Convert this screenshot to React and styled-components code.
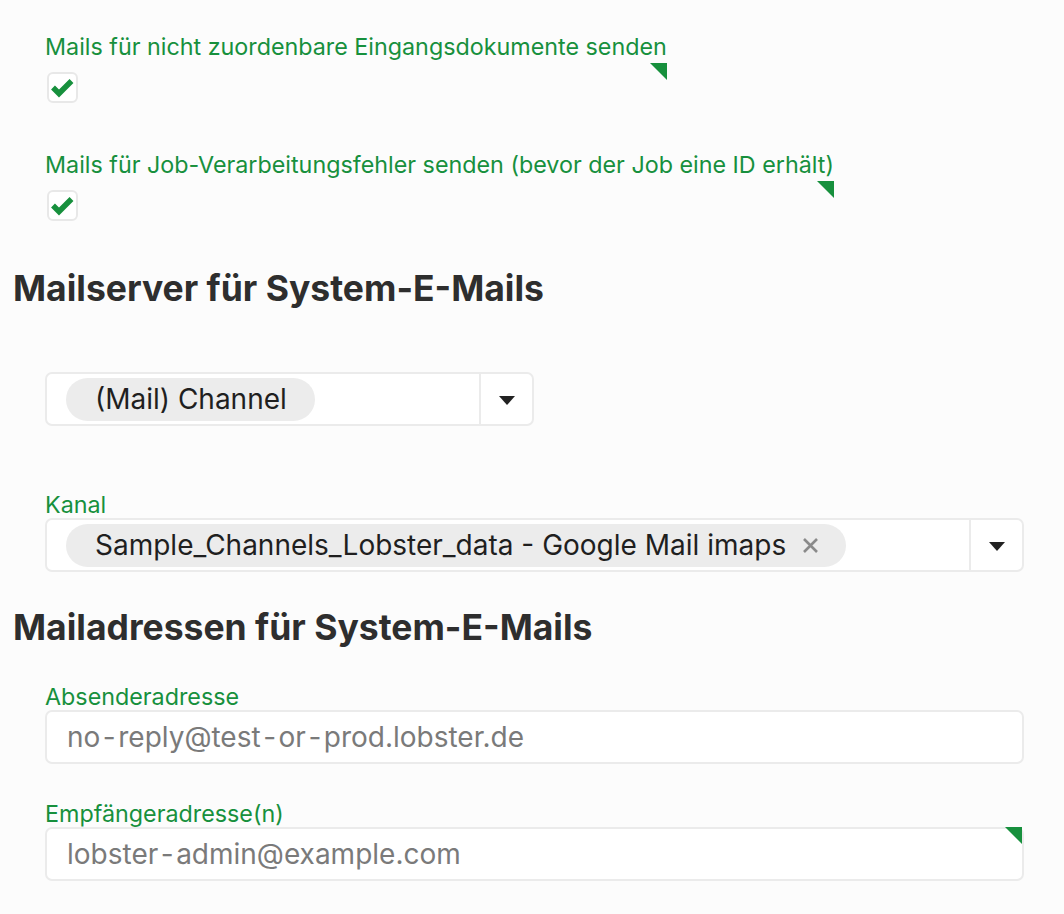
import React from "react";
import styled, { createGlobalStyle } from "styled-components";

const GlobalStyle = createGlobalStyle`
  body {
    margin: 0;
    background: #fcfcfc;
    font-family: Inter, "Noto Sans", sans-serif;
    color: #222;
  }
`;

const Page = styled.div`
  padding: 33px 0 30px 13px;
  width: 1011px;
`;

const Section = styled.div`
  padding-left: 32px;
  display: flex;
  flex-direction: column;
  align-items: flex-start;
`;

const CheckField = styled.div`
  display: inline-flex;
  flex-direction: column;
  margin-bottom: ${(p) => p.$gap || 0}px;
`;

const Label = styled.div`
  font-size: 23.3px;
  line-height: 27px;
  color: #17903d;
`;

const CheckRow = styled.div`
  position: relative;
  padding-top: 12px;
`;

// green corner flag on required / changed fields
const Marker = styled.span`
  position: absolute;
  top: ${(p) => p.$top || 0}px;
  right: 0;
  width: 0;
  height: 0;
  border-top: 17px solid #17903d;
  border-left: 17px solid transparent;
`;

const Box = styled.div`
  box-sizing: border-box;
  width: 31px;
  height: 31px;
  border: 2px solid #e8e8e8;
  border-radius: 6px;
  background: #fff;
  margin-left: 2px;

  svg {
    display: block;
    width: 27px;
    height: 27px;
  }
`;

const Heading = styled.h2`
  margin: ${(p) => p.$top}px 0 ${(p) => p.$bottom}px;
  font-size: 35.5px;
  line-height: 42px;
  font-weight: 700;
  color: #2e2e2e;
`;

const Field = styled.div`
  display: flex;
  flex-direction: column;
  align-self: stretch;
  margin-bottom: ${(p) => p.$gap || 0}px;
  ${(p) => p.$width && `align-self: flex-start; width: ${p.$width}px;`}
`;

const SelectBox = styled.div`
  position: relative;
  display: flex;
  height: 50px;
  border: 2px solid #ebebeb;
  border-radius: 7px;
  background: #fff;
`;

const ChipArea = styled.div`
  flex: 1;
  display: flex;
  align-items: center;
  padding-left: 19px;
`;

const Chip = styled.div`
  display: inline-flex;
  align-items: center;
  gap: 16px;
  height: 43px;
  padding: 0 ${(p) => (p.$removable ? 27 : 28)}px 0 29px;
  border-radius: 22px;
  background: #ececec;
  font-size: 28px;
  color: #1f1f1f;
`;

const Remove = styled.svg`
  width: 17px;
  height: 17px;
  stroke: #8a8a8a;
  stroke-width: 2.6;
`;

const Toggle = styled.div`
  width: 51px;
  border-left: 2px solid #ebebeb;
  display: flex;
  align-items: center;
  justify-content: center;
`;

const Caret = styled.span`
  width: 0;
  height: 0;
  border-left: 8px solid transparent;
  border-right: 8px solid transparent;
  border-top: 9px solid #222;
  margin-top: 2px;
`;

const InputBox = styled.div`
  position: relative;
  box-sizing: border-box;
  display: flex;
  align-items: center;
  height: 54px;
  border: 2px solid #ebebeb;
  border-radius: 7px;
  background: #fff;
  padding: 0 20px;
  font-size: 28px;
  color: #7a7a7a;
  cursor: text;
`;

const Dash = styled.span`
  margin: 0 2.5px;
`;

const Placeholder = ({ text }) => (
  <span>
    {text.split("-").map((part, i) => (
      <React.Fragment key={i}>
        {i > 0 && <Dash>-</Dash>}
        {part}
      </React.Fragment>
    ))}
  </span>
);

const Check = ({ label, gap }) => (
  <CheckField $gap={gap}>
    <Label>{label}</Label>
    <CheckRow>
      <Marker $top={3} />
      <Box>
        <svg viewBox="2 2 27 27">
          <path
            d="M6 15.5 L12 21.5 L24.5 9"
            fill="none"
            stroke="#17903d"
            strokeWidth="5.5"
            strokeLinejoin="miter"
          />
        </svg>
      </Box>
    </CheckRow>
  </CheckField>
);

const Select = ({ value, removable }) => (
  <SelectBox>
    <ChipArea>
      <Chip $removable={removable}>
        {value}
        {removable && (
          <Remove viewBox="0 0 17 17">
            <path d="M2 2 L15 15 M15 2 L2 15" />
          </Remove>
        )}
      </Chip>
    </ChipArea>
    <Toggle>
      <Caret />
    </Toggle>
  </SelectBox>
);

const TextField = ({ label, placeholder, flagged, gap }) => (
  <Field $gap={gap}>
    <Label>{label}</Label>
    <InputBox>
      {flagged && <Marker $top={-2} />}
      <Placeholder text={placeholder} />
    </InputBox>
  </Field>
);

export default function App() {
  return (
    <>
      <GlobalStyle />
      <Page>
        <Section>
          <Check label="Mails für nicht zuordenbare Eingangsdokumente senden" gap={48} />
          <Check label="Mails für Job-Verarbeitungsfehler senden (bevor der Job eine ID erhält)" />
        </Section>

        <Heading $top={47} $bottom={62}>Mailserver für System-E-Mails</Heading>
        <Section>
          <Field $width={489} $gap={65}>
            <Select value="(Mail) Channel" />
          </Field>
          <Field>
            <Label>Kanal</Label>
            <Select value="Sample_Channels_Lobster_data - Google Mail imaps" removable />
          </Field>
        </Section>

        <Heading $top={35} $bottom={34}>Mailadressen für System-E-Mails</Heading>
        <Section>
          <TextField label="Absenderadresse" placeholder="no-reply@test-or-prod.lobster.de" gap={36} />
          <TextField label="Empfängeradresse(n)" placeholder="lobster-admin@example.com" flagged />
        </Section>
      </Page>
    </>
  );
}
